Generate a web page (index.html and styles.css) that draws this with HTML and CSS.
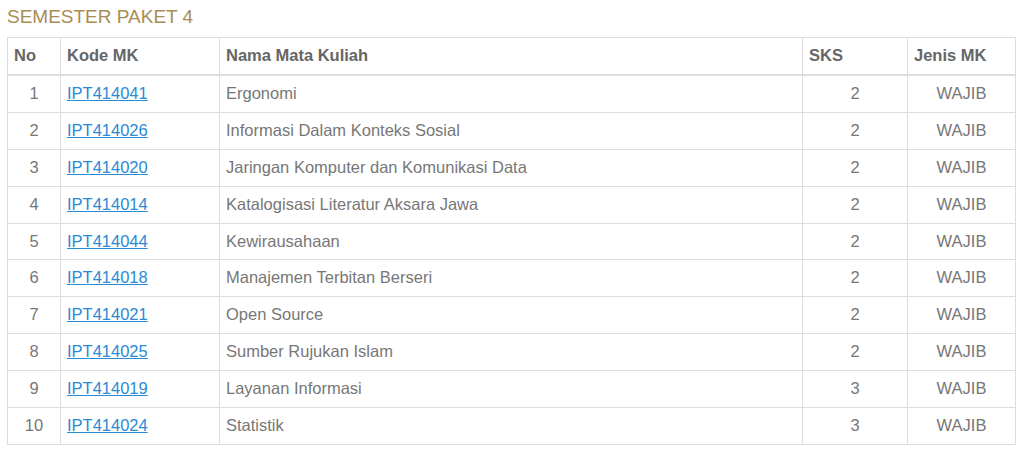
FILE: index.html
```html
<!DOCTYPE html>
<html lang="id">
<head>
<meta charset="utf-8">
<title>Semester Paket 4</title>
<link rel="stylesheet" href="styles.css">
</head>
<body>
<div class="wrap">
  <h4 class="title">SEMESTER PAKET 4</h4>
  <table class="tbl">
    <colgroup>
      <col class="c-no"><col class="c-kode"><col class="c-nama"><col class="c-sks"><col class="c-jenis">
    </colgroup>
    <thead>
      <tr><th>No</th><th>Kode MK</th><th>Nama Mata Kuliah</th><th>SKS</th><th>Jenis MK</th></tr>
    </thead>
    <tbody>
      <tr><td class="ctr">1</td><td><a href="#">IPT414041</a></td><td>Ergonomi</td><td class="ctr">2</td><td class="ctr">WAJIB</td></tr>
      <tr><td class="ctr">2</td><td><a href="#">IPT414026</a></td><td>Informasi Dalam Konteks Sosial</td><td class="ctr">2</td><td class="ctr">WAJIB</td></tr>
      <tr><td class="ctr">3</td><td><a href="#">IPT414020</a></td><td>Jaringan Komputer dan Komunikasi Data</td><td class="ctr">2</td><td class="ctr">WAJIB</td></tr>
      <tr><td class="ctr">4</td><td><a href="#">IPT414014</a></td><td>Katalogisasi Literatur Aksara Jawa</td><td class="ctr">2</td><td class="ctr">WAJIB</td></tr>
      <tr><td class="ctr">5</td><td><a href="#">IPT414044</a></td><td>Kewirausahaan</td><td class="ctr">2</td><td class="ctr">WAJIB</td></tr>
      <tr><td class="ctr">6</td><td><a href="#">IPT414018</a></td><td>Manajemen Terbitan Berseri</td><td class="ctr">2</td><td class="ctr">WAJIB</td></tr>
      <tr><td class="ctr">7</td><td><a href="#">IPT414021</a></td><td>Open Source</td><td class="ctr">2</td><td class="ctr">WAJIB</td></tr>
      <tr><td class="ctr">8</td><td><a href="#">IPT414025</a></td><td>Sumber Rujukan Islam</td><td class="ctr">2</td><td class="ctr">WAJIB</td></tr>
      <tr><td class="ctr">9</td><td><a href="#">IPT414019</a></td><td>Layanan Informasi</td><td class="ctr">3</td><td class="ctr">WAJIB</td></tr>
      <tr><td class="ctr">10</td><td><a href="#">IPT414024</a></td><td>Statistik</td><td class="ctr">3</td><td class="ctr">WAJIB</td></tr>
    </tbody>
  </table>
</div>
</body>
</html>
```

FILE: styles.css
```css
html, body {
  margin: 0;
  padding: 0;
  background: #fff;
}
body {
  font-family: "Liberation Sans", Arial, sans-serif;
  color: #777;
}
.wrap {
  padding: 6px 7px 0 7px;
}
.title {
  margin: 0 0 9px 0;
  font-size: 19px;
  line-height: 22px;
  font-weight: normal;
  color: #a88d55;
}
.tbl {
  width: 1008px;
  border-collapse: collapse;
  table-layout: fixed;
  border: 1px solid #ddd;
  font-size: 16.5px;
}
.c-no { width: 53px; }
.c-kode { width: 159px; }
.c-nama { width: 583px; }
.c-sks { width: 105px; }
.c-jenis { width: 108px; }
.tbl th, .tbl td {
  border: 1px solid #ddd;
  padding: 8px 6px;
  line-height: 19.9px;
  text-align: left;
  vertical-align: top;
}
.tbl th {
  font-weight: bold;
  color: #666;
  border-bottom: 2px solid #ddd;
}
.tbl td.ctr {
  text-align: center;
}
.tbl a {
  color: #2a8ad4;
  text-decoration: underline;
}
```
